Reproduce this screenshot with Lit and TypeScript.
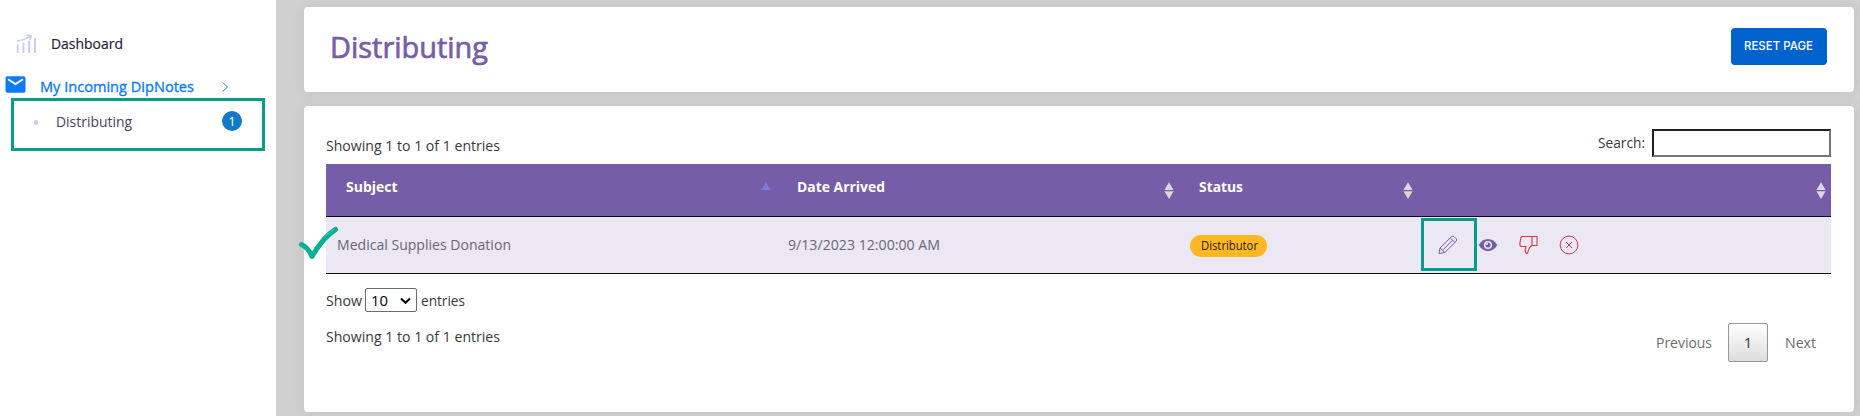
import { LitElement, html, css, svg } from "lit";
import { customElement, property } from "lit/decorators.js";

/** A single line of text condensed or widened to fill a given width. */
@customElement("fit-text")
class FitText extends LitElement {
  @property({ type: Number }) w = 0;
  static styles = css`
    :host { display: block; white-space: nowrap; line-height: 20px; height: 20px; flex: none; }
    span { display: inline-block; transform-origin: 0 50%; }
  `;
  render() {
    return html`<span><slot></slot></span>`;
  }
  firstUpdated() {
    const span = this.renderRoot.querySelector("span") as HTMLElement;
    const natural = span.getBoundingClientRect().width;
    this.style.width = `${this.w}px`;
    if (natural) span.style.transform = `scaleX(${this.w / natural})`;
  }
}

@customElement("sort-mark")
class SortMark extends LitElement {
  @property() mode = "both";
  static styles = css`
    :host { display: block; width: 10px; height: 18px; margin-top: 18px; }
    svg { display: block; }
  `;
  render() {
    return html`<svg width="10" height="18" viewBox="0 0 10 18">
      ${this.mode === "asc"
        ? svg`<path d="M5 .3 9.8 8H.2z" fill="#7b7bdc"/>`
        : svg`<path d="M5 .2 9.6 8H.4zM5 17 9.6 9.2H.4z" fill="#d9d9d9"/>`}
    </svg>`;
  }
}

@customElement("app-root")
class AppRoot extends LitElement {
  static styles = css`
    :host {
      display: flex; position: relative; width: 1860px; height: 416px; overflow: hidden;
      box-sizing: border-box; background: #d0d0d0; color: #38383c;
      font-family: "Open Sans", "Noto Sans", sans-serif; font-size: 15px;
    }
    * { box-sizing: border-box; }
    svg { display: block; flex: none; }
    .side { width: 276px; background: #fff; flex: none; padding-top: 33px; }
    .item { display: flex; height: 20px; }
    .dash { padding-left: 16px; color: #24243a; -webkit-text-stroke: .2px; }
    .dash svg { margin: 1px 15px 0 0; }
    .mail { margin-top: 23px; padding-left: 5px; color: #0a7bff; -webkit-text-stroke: .35px; }
    .mail svg.env { margin: 0 14px 0 0; }
    .mail svg.chev { margin: 6px 0 0 27px; }
    .sub { margin-top: 15px; padding-left: 34px; color: #45455a; }
    .dot { width: 4px; height: 5px; border-radius: 2px; background: #c3cbf7; margin: 9px 18px 0 0; }
    .count { width: 20px; height: 20px; border-radius: 50%; background: #1279c6; color: #fff; font-size: 13px;
      line-height: 20px; text-align: center; margin-left: 90px; }
    .main { flex: 1; padding: 7px 6px 4px 28px; display: flex; flex-direction: column; gap: 14px; }
    .card { background: #fff; border-radius: 4px; box-shadow: 0 0 12px rgba(90, 90, 105, .1); }
    .head { height: 85px; display: flex; justify-content: space-between; padding: 21px 27px 0 26px; }
    .title { font-size: 29.5px; -webkit-text-stroke: .7px; color: #765da8; line-height: 38px; height: 38px; }
    .reset { width: 96px; height: 37px; border: 0; border-radius: 4px; background: #0062cc; color: #fff; padding: 0 0 0 13px;
      font-family: Inter, sans-serif; font-weight: 500; font-size: 12px; display: flex; align-items: center; }
    .reset fit-text { margin-top: -1px; }
    .body { height: 306px; padding: 23px 23px 0 22px; }
    .tools { display: flex; justify-content: space-between; height: 35px; }
    .info { margin-top: 6px; }
    .search { display: flex; gap: 7px; }
    .search fit-text { margin-top: 3px; }
    .field { width: 179px; height: 28px; border: 2px solid; border-color: #1f1f1f #767676 #767676 #1f1f1f; background: #fff;
      padding: 0; outline: 0; border-radius: 0; }
    .row { display: grid; grid-template-columns: 451px 402px 239px 413px; }
    .thead { height: 53px; background: #765da8; color: #fff; font-weight: 700; border-bottom: 1px solid #0b0b10; }
    .th { display: flex; justify-content: space-between; padding: 0 6px 0 20px; }
    .th:not(:first-child) { padding-right: 5px; }
    .th fit-text { margin-top: 12px; }
    .tbody { height: 57px; background: #ebe7f3; color: #686874; border-bottom: 1px solid #0b0b10; }
    .td { padding: 17px 0 0 11px; }
    .pill { width: 77px; height: 22px; margin-top: 1px; border-radius: 11px; background: #ffb822; color: #1c1c1c; font-size: 12.5px;
      padding: 1px 0 0 11px; }
    .acts { display: flex; padding: 18px 0 0 20px; }
    .acts svg + svg { margin-left: 20.3px; }
    .length { display: flex; margin-top: 14px; height: 24px; }
    .length fit-text { margin-top: 2px; }
    .select { width: 52px; height: 24px; border: 1px solid #6b6b6b; border-radius: 2px; display: flex; margin: 0 4px 0 3px; padding-left: 5px; color: #000; }
    .select fit-text { margin-top: 1px; }
    .select svg { margin: 8px 0 0 12px; }
    .foot { display: flex; justify-content: space-between; margin-top: 11px; height: 40px; }
    .foot .left { margin-top: 3px; }
    .pager { display: flex; color: #6c6c6c; padding-right: 15px; }
    .pager fit-text { margin-top: 9px; }
    .page { width: 40px; height: 39px; border: 1px solid #979797; border-radius: 2px; text-align: center; line-height: 37px; color: #333;
      background: linear-gradient(#fff, #dcdcdc); margin: 0 17px 0 16px; }
    .mark { position: absolute; border: 3px solid #089c8c; }
    .mark.nav { left: 11px; top: 98px; width: 254px; height: 53px; }
    .mark.edit { left: 1421px; top: 218px; width: 56px; height: 53px; }
    .tick { position: absolute; left: 298px; top: 226px; }
  `;

  render() {
    return html`
      <nav class="side">
        <div class="item dash">
          <svg width="20" height="20" viewBox="0 0 20 20" fill="none" stroke="#c3cbf7" stroke-width="1.8">
            <path d="M1.700 19v-8.500M7.500 19V9M13.200 19V7M19 19V4"/>
            <path d="M1 7C6 6.500 10 5 14.500 2.300M10.800 1l4.700.8-1.900 3.800" stroke-width="1.500"/>
          </svg>
          <fit-text w="72">Dashboard</fit-text>
        </div>
        <div class="item mail">
          <svg class="env" width="21" height="17" viewBox="0 0 21 17">
            <rect x=".5" y=".3" width="20" height="16.400" rx="1.800" fill="#0a7bff"/>
            <path d="M3 3.200l7.500 4.900L18 3.200" fill="none" stroke="#fff" stroke-width="1.900"/>
          </svg>
          <fit-text w="154">My Incoming DipNotes</fit-text>
          <svg class="chev" width="8" height="10" viewBox="0 0 8 10"><path d="M1.500.4 6.500 5 1.500 9.600" fill="none" stroke="#2d89f5" stroke-width="1"/></svg>
        </div>
        <div class="item sub">
          <i class="dot"></i>
          <fit-text w="76">Distributing</fit-text>
          <div class="count">1</div>
        </div>
      </nav>

      <main class="main">
        <section class="card head">
          <fit-text class="title" w="158">Distributing</fit-text>
          <button class="reset"><fit-text w="69">RESET PAGE</fit-text></button>
        </section>

        <section class="card body">
          <div class="tools">
            <fit-text class="info" w="174">Showing 1 to 1 of 1 entries</fit-text>
            <div class="search"><fit-text w="47">Search:</fit-text><input class="field" /></div>
          </div>

          <div class="row thead">
            <div class="th"><fit-text w="51.500">Subject</fit-text><sort-mark mode="asc"></sort-mark></div>
            <div class="th"><fit-text w="88">Date Arrived</fit-text><sort-mark></sort-mark></div>
            <div class="th"><fit-text w="44">Status</fit-text><sort-mark></sort-mark></div>
            <div class="th"><span></span><sort-mark></sort-mark></div>
          </div>
          <div class="row tbody">
            <div class="td"><fit-text w="174">Medical Supplies Donation</fit-text></div>
            <div class="td"><fit-text w="152">9/13/2023 12:00:00 AM</fit-text></div>
            <div class="td"><div class="pill"><fit-text w="57">Distributor</fit-text></div></div>
            <div class="acts">
              <svg width="20" height="20" viewBox="0 0 20 20" fill="none" stroke="#765da8" stroke-width="1">
                <path d="M1 18.500l1-5.500L13.500 1.700q1.300-1.200 2.600 0l2 2q1.300 1.300 0 2.600L6.800 17.500z"/>
                <path d="M2 13l4.800 4.500M12.300 3l4.700 4.500M4.500 15.300l10-10"/>
              </svg>
              <svg width="20" height="20" viewBox="0 0 20 20">
                <path d="M.7 10C3 6 6.300 3.900 10 3.900S17 6 19.300 10C17 14 13.700 16.100 10 16.100S3 14 .7 10z" fill="#765da8"/>
                <circle cx="10" cy="10" r="4.100" fill="#ebe7f3"/><circle cx="10" cy="10" r="2.500" fill="#765da8"/><circle cx="9" cy="9" r="1" fill="#ebe7f3"/>
              </svg>
              <svg width="20" height="20" viewBox="0 0 20 20" fill="none" stroke="#dc3545" stroke-width="1.100">
                <path d="M13 1.500H3.500Q2.300 1.500 2 2.700L1 7.500Q.500 11.500 2.500 11.500H7Q6 14.500 6.500 17 7.300 19 8.700 18C9.300 15 10 12 13 10.500zM13 1.500H18V10.500H13z"/>
              </svg>
              <svg width="20" height="20" viewBox="0 0 20 20" fill="none" stroke="#dc3545" stroke-width="1">
                <circle cx="10" cy="10" r="8.900"/><path d="M7 7l6 6M13 7l-6 6"/>
              </svg>
            </div>
          </div>

          <div class="length">
            <fit-text w="36">Show</fit-text>
            <div class="select"><fit-text w="17">10</fit-text>
              <svg width="11" height="8" viewBox="0 0 11 8"><path d="M1 1.500l4.500 4.300L10 1.500" fill="none" stroke="#000" stroke-width="2"/></svg>
            </div>
            <fit-text w="44">entries</fit-text>
          </div>

          <div class="foot">
            <fit-text class="left" w="174">Showing 1 to 1 of 1 entries</fit-text>
            <div class="pager">
              <fit-text w="56">Previous</fit-text>
              <div class="page">1</div>
              <fit-text w="31">Next</fit-text>
            </div>
          </div>
        </section>
      </main>

      <div class="mark nav"></div>
      <div class="mark edit"></div>
      <svg class="tick" width="42" height="35" viewBox="0 0 42 35" fill="none" stroke="#08b093" stroke-linecap="round" stroke-linejoin="round">
        <path d="M3.500 18.500C7 20 11 23.500 14 30.500 20 20 27 10 37.500 3.500" stroke-width="5"/>
        <path d="M28 9.500 36 3.500" stroke="#2fc2a6" stroke-width="1.200"/>
      </svg>
    `;
  }
}
